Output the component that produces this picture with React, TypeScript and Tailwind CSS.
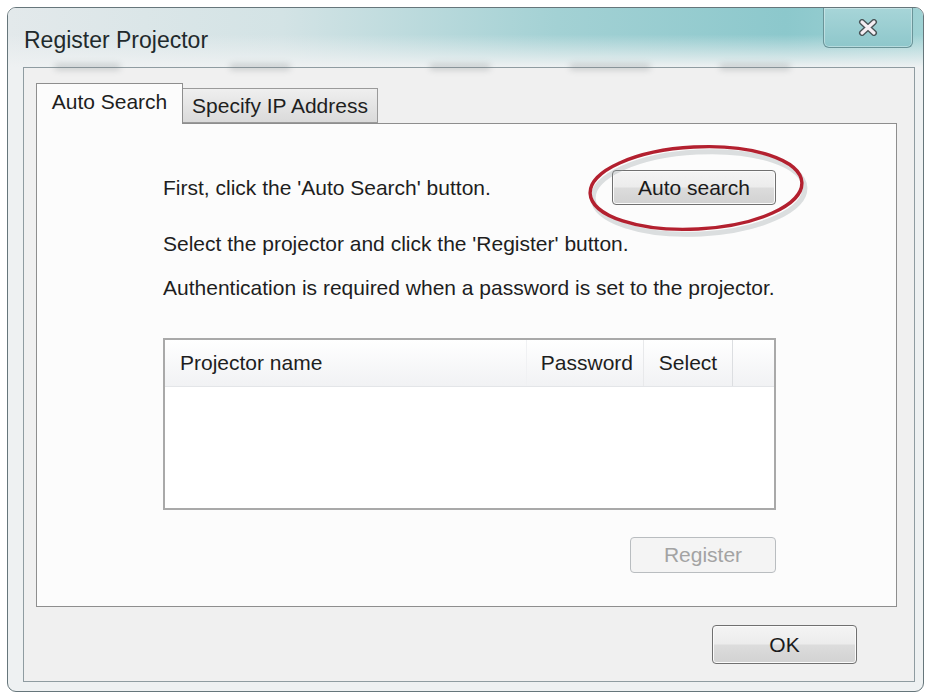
import React from 'react';

function WinButton({ label, disabled, className }: { label: string; disabled?: boolean; className: string }) {
    return (
        <button
            disabled={disabled}
            className={`flex items-center justify-center rounded-[4px] border text-[21px] ${disabled
                ? 'border-[#b9bdc0] bg-[#f4f4f4] text-[#a3a3a3]'
                : 'border-[#707070] bg-[linear-gradient(to_bottom,#f4f4f4_0%,#ececec_48%,#dcdcdc_52%,#d2d2d2_100%)] text-[#1b1b1b] shadow-[inset_0_0_0_1px_#fbfbfb]'
                } ${className}`}
        >
            {label}
        </button>
    );
}

function CloseGlyph() {
    return (
        <svg width="20" height="17" viewBox="0 0 20 17">
            <path d="M4 3 L16 14 M16 3 L4 14" stroke="#4a5558" strokeWidth="6" strokeLinecap="round" />
            <path d="M4 3 L16 14 M16 3 L4 14" stroke="#f6eef3" strokeWidth="3.2" strokeLinecap="round" />
        </svg>
    );
}

export default function App() {
    return (
        <div className="w-[929px] h-[696px] bg-white pt-[7px] pl-[7px] pr-[5px] pb-[4px] font-['Liberation_Sans',Arial,sans-serif] text-[#1e1e1e]">
            <div className="h-full flex flex-col rounded-[9px] border border-[#66767b] overflow-hidden bg-[#eef1f2]">
                {/* title bar */}
                <div className="h-[59px] flex flex-col bg-[linear-gradient(to_bottom,rgba(238,241,242,0)_45%,#eef1f2_100%),linear-gradient(to_right,#e3e9eb_0%,#d3e3e5_30%,#a3d1d4_60%,#8cc8cc_85%,#9fd2d4_100%)]">
                    <div className="flex items-start justify-between">
                        <div className="pl-[16px] pt-[19px] text-[23px] leading-[26px] text-[#1f2a2c]">Register Projector</div>
                        <div className="mr-[10px] w-[90px] h-[40px] flex items-center justify-center rounded-b-[6px] border border-t-0 border-[#6a9498] bg-[linear-gradient(to_bottom,#a7d5d8,#8ec7cb)] shadow-[inset_0_0_0_1px_rgba(255,255,255,0.35)]">
                            <CloseGlyph />
                        </div>
                    </div>
                    {/* blurred background behind the glass */}
                    <div className="flex items-center pl-[47px] pt-[11px] opacity-30 blur-[3px]">
                        <span className="w-[65px] h-[6px] bg-[#6d7578]" />
                        <span className="ml-[110px] w-[60px] h-[6px] bg-[#6d7578]" />
                        <span className="ml-[140px] w-[60px] h-[6px] bg-[#6d7578]" />
                        <span className="ml-[80px] w-[80px] h-[6px] bg-[#6d7578]" />
                        <span className="ml-[70px] w-[70px] h-[6px] bg-[#6d7578]" />
                    </div>
                </div>

                {/* client area */}
                <div className="flex-1 pl-[15px] pr-[8px] pb-[9px]">
                    <div className="h-full flex flex-col border border-[#8f9ca1] bg-[#f0f0f0] pl-[12px] pr-[17px] pt-[15px]">
                        {/* tabs */}
                        <div className="flex items-end h-[40px]">
                            <div className="relative z-10 w-[147px] h-[41px] -mb-px flex items-center justify-center border border-b-0 border-[#8e8e8e] bg-[#fcfcfc] text-[21px] pb-[4px]">
                                Auto Search
                            </div>
                            <div className="w-[195px] h-[35px] flex items-center justify-center border border-l-0 border-[#9a9a9a] bg-[linear-gradient(to_bottom,#efefef,#dadada)] text-[21px]">
                                Specify IP Address
                            </div>
                        </div>

                        {/* tab panel */}
                        <div className="h-[484px] border border-[#8e8e8e] bg-[#fcfcfc] pl-[126px] pt-[46px]">
                            <div className="w-[613px] flex flex-col text-[21px]">
                                <div className="flex items-center justify-between h-[35px]">
                                    <span>First, click the 'Auto Search' button.</span>
                                    <div className="relative">
                                        <svg className="absolute left-[-26px] top-[-26px] pointer-events-none" width="226" height="94" viewBox="0 0 226 94">
                                            <ellipse cx="113" cy="49" rx="106" ry="41" fill="none" stroke="#8f989b" strokeWidth="5" opacity="0.3" transform="rotate(-3 113 49)" />
                                            <ellipse cx="110" cy="44" rx="106" ry="41" fill="none" stroke="#b3202f" strokeWidth="3.4" transform="rotate(-3 110 44)" />
                                        </svg>
                                        <WinButton label="Auto search" className="w-[164px] h-[35px]" />
                                    </div>
                                </div>
                                <div className="mt-[21px] leading-[36px]">Select the projector and click the 'Register' button.</div>
                                <div className="mt-[8px] leading-[36px]">Authentication is required when a password is set to the projector.</div>

                                {/* list view */}
                                <div className="mt-[32px] h-[172px] border-2 border-[#a9a9a9] bg-white flex flex-col">
                                    <div className="h-[47px] flex items-stretch border-b border-[#e3e5e8] bg-[linear-gradient(to_bottom,#ffffff,#f1f2f4)] text-[21px]">
                                        <div className="w-[362px] flex items-center pl-[15px] border-r border-[#f0f1f3]">Projector name</div>
                                        <div className="w-[117px] flex items-center justify-end pr-[10px] border-r border-[#e8e9eb]">Password</div>
                                        <div className="w-[89px] flex items-center justify-center border-r border-[#dcdee1]">Select</div>
                                        <div className="flex-1" />
                                    </div>
                                </div>

                                <div className="mt-[27px] flex justify-end">
                                    <WinButton label="Register" disabled className="w-[146px] h-[36px]" />
                                </div>
                            </div>
                        </div>

                        {/* dialog buttons */}
                        <div className="flex justify-end pt-[18px] pr-[40px]">
                            <WinButton label="OK" className="w-[145px] h-[39px]" />
                        </div>
                    </div>
                </div>
            </div>
        </div>
    );
}
